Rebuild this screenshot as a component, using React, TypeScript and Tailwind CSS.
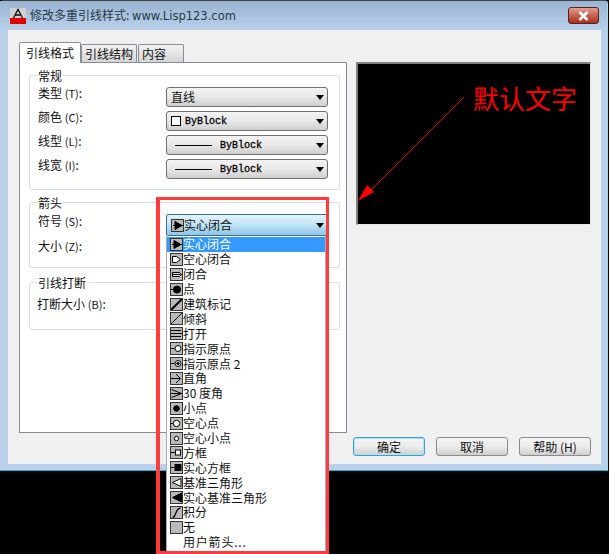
import type { ReactNode } from 'react';

const cjk = '"Noto Sans CJK SC", "DejaVu Sans", sans-serif';

// tiny arrowhead previews, 12x12 canvas
function ArrowIcon({ kind }: { kind: string }) {
  const shapes: Record<string, ReactNode> = {
    solid: (
      <>
        <path d="M1 5.500h10" />
        <path d="M3 1.500l7 4-7 4z" fill="#000" />
      </>
    ),
    hollow: <path d="M1.500 2.500h4l4 3-4 3h-4z" fill="#fff" />,
    closed: (
      <>
        <path d="M1.500 3.500h7l2 2-2 2h-7z" fill="#d8d8d8" />
        <path d="M1.500 5.500h8" />
      </>
    ),
    dot: (
      <>
        <path d="M0 5.500h4" />
        <circle cx="6" cy="5.500" r="3.600" fill="#000" />
      </>
    ),
    tick: <path d="M0 11L11 0" strokeWidth="2" />,
    oblique: <path d="M0 11L11 0" />,
    open: <path d="M0 2.500h10l0 0M0 5.500h11M0 8.500h10" />,
    origin: (
      <>
        <path d="M0 5.500h4" />
        <circle cx="7" cy="5.500" r="3" fill="#fff" />
      </>
    ),
    origin2: (
      <>
        <path d="M0 5.500h4" />
        <circle cx="7" cy="5.500" r="3" fill="#fff" />
        <circle cx="7" cy="5.500" r="1.200" fill="#000" />
      </>
    ),
    right: <path d="M0 5.500h9M5 1l4.500 4.500L5 10" />,
    thirty: <path d="M0 5.500h11M0.500 1.500l10 4-10 4" />,
    small: <circle cx="5.500" cy="5.500" r="2.800" fill="#000" />,
    ring: (
      <>
        <path d="M0 5.500h2" />
        <circle cx="5.500" cy="5.500" r="3.200" fill="#fff" />
      </>
    ),
    ringSmall: <circle cx="5.500" cy="5.500" r="2.200" fill="#fff" />,
    box: (
      <>
        <path d="M0 5.500h4" />
        <rect x="4.500" y="3" width="5" height="5" fill="#fff" />
      </>
    ),
    boxSolid: (
      <>
        <path d="M0 5.500h4" />
        <rect x="4" y="2.500" width="6" height="6" fill="#000" />
      </>
    ),
    datum: <path d="M10 1.500l-8.500 4 8.500 4z" fill="#fff" />,
    datumSolid: <path d="M10.500 1l-9 4.500 9 4.500z" fill="#000" />,
    integral: <path d="M1.500 10.500c4 0 2.500-9.500 8-9.500" strokeWidth="1.300" />,
    none: null,
  };
  return (
    <svg width="13" height="13" viewBox="0 0 11 11" fill="none" stroke="#000" className="shrink-0 bg-[#b9b9b9] border border-[#333] box-border">
      {shapes[kind]}
    </svg>
  );
}

function Caret() {
  return <span className="ml-auto mr-[2px] w-0 h-0 border-x-[4.500px] border-x-transparent border-t-[5px] border-t-black shrink-0" />;
}

function Combo({ children, active }: { children: ReactNode; active?: boolean }) {
  return (
    <div
      className={
        active
          ? 'w-[162px] h-[22px] flex items-center pl-[4px] pr-[1px] rounded-[2px] border border-[#3c6f96] bg-gradient-to-b from-[#e4f3fb] via-[#bfe3f6] to-[#8fc4e2]'
          : 'w-[162px] h-[20px] flex items-center pl-[4px] pr-[1px] rounded-[3px] border border-[#707070] bg-gradient-to-b from-[#f3f3f3] via-[#e8e8e8] to-[#cfcfcf]'
      }
    >
      {children}
      <Caret />
    </div>
  );
}

function ByBlock() {
  return <span className="mt-[2px] font-['Liberation_Mono',monospace] text-[10px] leading-none text-black [-webkit-text-stroke:0.3px_#000]">ByBlock</span>;
}

function LineByBlock() {
  return (
    <>
      <span className="w-[37px] h-px bg-black ml-[4px] mr-[8px]" />
      <ByBlock />
    </>
  );
}

function Label({ text, keyName }: { text: string; keyName: string }) {
  return (
    <span className="w-[136px] pl-[8px] mb-[8px] text-[12px] leading-none whitespace-pre text-[#111]">
      {text} <span className="text-[11px]">({keyName})</span>:
    </span>
  );
}

function Group({ title, className, children }: { title: string; className: string; children?: ReactNode }) {
  return (
    <div className={`relative border border-[#d5dfe5] rounded-[3px] ${className}`}>
      <span className="absolute -top-[7px] left-[7px] px-[1px] bg-white text-[12px] leading-[14px] text-[#111]">{title}</span>
      {children}
    </div>
  );
}

const items: [string, string][] = [
  ['solid', '实心闭合'],
  ['hollow', '空心闭合'],
  ['closed', '闭合'],
  ['dot', '点'],
  ['tick', '建筑标记'],
  ['oblique', '倾斜'],
  ['open', '打开'],
  ['origin', '指示原点'],
  ['origin2', '指示原点 2'],
  ['right', '直角'],
  ['thirty', '30 度角'],
  ['small', '小点'],
  ['ring', '空心点'],
  ['ringSmall', '空心小点'],
  ['box', '方框'],
  ['boxSolid', '实心方框'],
  ['datum', '基准三角形'],
  ['datumSolid', '实心基准三角形'],
  ['integral', '积分'],
  ['none', '无'],
];

function DropList() {
  return (
    <div className="absolute left-0 top-[22px] w-[160px] h-[316px] bg-white border-x border-b border-[#a8a8c0] pt-[1px] z-10">
      {items.map(([kind, label], i) => (
        <div
          key={kind}
          className={`h-[14.900px] flex items-center pl-[3px] text-[12px] leading-none whitespace-pre ${i === 0 ? 'bg-[#3399ff] text-white' : 'text-[#111]'}`}
        >
          <ArrowIcon kind={kind} />
          <span>{label}</span>
        </div>
      ))}
      <div className="h-[14.900px] flex items-center pl-[16px] text-[12px] leading-none text-[#111] tracking-[0.8px]">用户箭头...</div>
    </div>
  );
}

function Tab({ label, active }: { label: string; active?: boolean }) {
  return active ? (
    <div className="w-[62px] h-[21px] -mb-px z-10 bg-white border border-b-0 border-[#898c95] rounded-t-[2px] flex items-center justify-center text-[12px] text-[#111]">
      {label}
    </div>
  ) : (
    <div className="h-[18px] px-[3px] min-w-[46px] mr-px bg-gradient-to-b from-[#f2f2f2] to-[#d5d5d5] border border-b-0 border-[#898c95] rounded-t-[2px] flex items-center text-[12px] text-[#111]">
      {label}
    </div>
  );
}

function Btn({ label, primary }: { label: string; primary?: boolean }) {
  return (
    <div
      className={`w-[72px] h-[19px] rounded-[3px] border flex items-center justify-center text-[12px] text-[#111] bg-gradient-to-b from-[#f4f4f4] via-[#ececec] to-[#cfcfcf] ${
        primary ? 'border-[#3c9fd0] shadow-[inset_0_0_0_1px_#a8e4f8]' : 'border-[#8a8a8a]'
      }`}
    >
      {label}
    </div>
  );
}

export default function App() {
  return (
    <div className="relative w-[609px] h-[554px] bg-black overflow-hidden" style={{ fontFamily: cjk }}>
      <div className="w-[608px] h-[471px] flex flex-col border-t border-[#444] border-r border-b border-r-[#9fd8e8] border-b-[#18b8d8] bg-[#b9d1ea] rounded-t-[4px]">
        {/* title bar */}
        <div className="h-[29px] flex items-center pl-[10px] bg-gradient-to-b from-[#99b4d1] to-[#b9d1ea] shrink-0">
          <svg width="16" height="16" viewBox="0 0 16 16" className="shrink-0">
            <rect width="16" height="16" fill="#d0d0d0" />
            <rect y="10" width="16" height="6" fill="#e00000" />
            <path d="M3.500 10L8 1.500l4.500 8.500M5.500 7h5" fill="none" stroke="#111" strokeWidth="1.300" />
          </svg>
          <span className="ml-[4px] text-[12px] text-[#26384a] whitespace-pre">修改多重引线样式: <span className="font-['DejaVu_Sans',sans-serif] text-[11.500px]">www.Lisp123.com</span></span>
          <div className="ml-auto mr-[8px] w-[31px] h-[17px] rounded-[3px] border border-[#5a2020] bg-gradient-to-b from-[#e0a090] via-[#c8604e] to-[#a83020] flex items-center justify-center">
            <svg width="11" height="10" viewBox="0 0 11 10">
              <path d="M1.500 1l8 8M9.500 1l-8 8" stroke="#fff" strokeWidth="2.600" />
            </svg>
          </div>
        </div>

        {/* dialog body */}
        <div className="mx-2 w-[593px] h-[434px] bg-[#f0f0f0] pl-[11px] pt-[12px]">
          <div className="flex items-start">
            <div className="w-[328px] shrink-0">
              <div className="flex items-end h-[20px]">
                <Tab label="引线格式" active />
                <Tab label="引线结构" />
                <Tab label="内容" />
              </div>
              <div className="h-[371px] bg-white border border-[#898c95] pl-[9px] pr-[6px] pt-[12px]">
                <Group title="常规" className="h-[115px] pt-[11px]">
                  <div className="flex flex-col gap-[4px]">
                    <div className="flex items-center">
                      <Label text="类型" keyName="T" />
                      <Combo><span className="text-[12px] text-[#111]">直线</span></Combo>
                    </div>
                    <div className="flex items-center">
                      <Label text="颜色" keyName="C" />
                      <Combo>
                        <span className="w-[10px] h-[10px] border border-black bg-white mr-[4px]" />
                        <ByBlock />
                      </Combo>
                    </div>
                    <div className="flex items-center">
                      <Label text="线型" keyName="L" />
                      <Combo><LineByBlock /></Combo>
                    </div>
                    <div className="flex items-center">
                      <Label text="线宽" keyName="I" />
                      <Combo><LineByBlock /></Combo>
                    </div>
                  </div>
                </Group>
                <Group title="箭头" className="h-[66px] mt-[12px] pt-[11px]">
                  <div className="flex items-center">
                    <Label text="符号" keyName="S" />
                    <div className="relative">
                      <Combo active>
                        <ArrowIcon kind="solid" />
                        <span className="text-[12px] text-[#111]">实心闭合</span>
                      </Combo>
                      <DropList />
                    </div>
                  </div>
                  <div className="mt-[4px] pl-[8px] text-[12px] leading-none whitespace-pre text-[#111]">大小 <span className="text-[11px]">(Z)</span>:</div>
                </Group>
                <Group title="引线打断" className="h-[48px] mt-[14px] pt-[15px]">
                  <span className="pl-[7px] text-[12px] leading-none whitespace-pre text-[#111] block">打断大小 <span className="text-[11px]">(B)</span>:</span>
                </Group>
              </div>
            </div>

            {/* preview */}
            <div className="relative ml-[9px] mt-[20px] w-[235px] h-[163px] bg-black border-t-2 border-l-2 border-t-[#808080] border-l-[#808080] border-r border-b border-r-[#e8e8e8] border-b-[#e8e8e8]">
              <svg width="232" height="160" viewBox="0 0 232 160" className="absolute left-0 top-0">
                <path d="M106 33L6 133" stroke="#ff0000" fill="none" />
                <path d="M0 137l9-16 7 7z" fill="#ff0000" />
              </svg>
              <span className="absolute left-[115px] top-[17px] text-[26px] leading-[34px] text-[#ff0000] whitespace-nowrap">默认文字</span>
            </div>
          </div>

          <div className="flex justify-end gap-[11px] pr-[10px] mt-[4px]">
            <Btn label="确定" primary />
            <Btn label="取消" />
            <Btn label="帮助 (H)" />
          </div>
        </div>
      </div>

      {/* red callout drawn over the screenshot */}
      <div className="absolute left-[156px] top-[197px] w-[173px] h-[357px] border-[3px] border-l-4 border-[#ff3b3b] z-20" />
    </div>
  );
}
